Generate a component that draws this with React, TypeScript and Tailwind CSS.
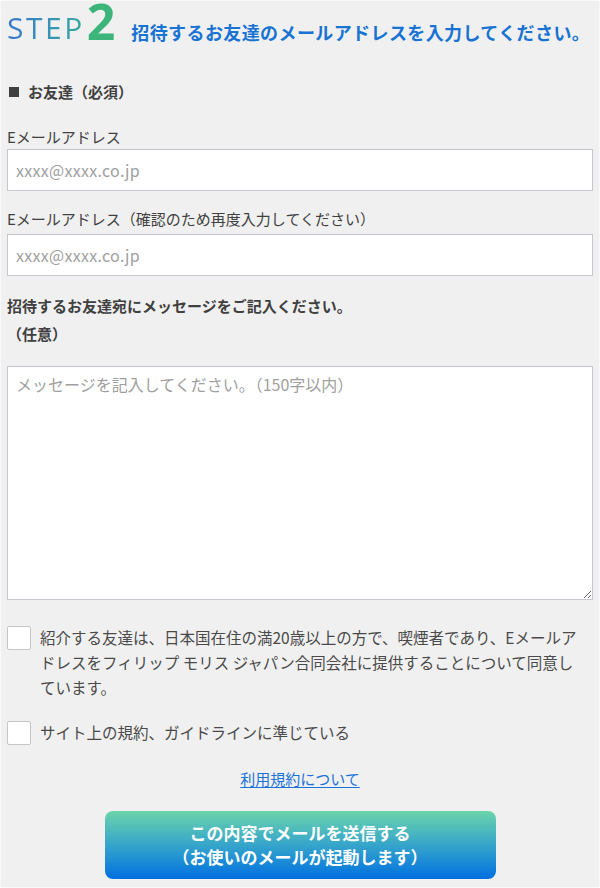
const jp = { fontFamily: '"Noto Sans CJK JP", "Noto Sans", sans-serif' };

export default function App() {
  return (
    <div
      className="min-h-[888px] border border-[#f9f9f9] bg-[#f0f0f0] px-[6px] text-[#404040]"
      style={jp}
    >
      <header className="flex h-[48px] items-end pb-[2px]">
        <span
          className="bg-gradient-to-r from-[#3878cc] to-[#3aa89c] bg-clip-text pb-[1px] text-[30px] leading-[36px] font-medium tracking-[2.5px] text-transparent"
          style={{ fontFamily: '"Open Sans", sans-serif' }}
        >
          STEP
        </span>
        <span
          className="ml-[2px] text-[50px] leading-[52px] font-bold text-[#3db57a]"
          style={{ fontFamily: '"Open Sans", sans-serif' }}
        >
          2
        </span>
        <h1 className="mb-[2px] ml-[16px] text-[18px] leading-[26px] font-bold tracking-[0.4px] whitespace-nowrap text-[#1873d3]">
          招待するお友達のメールアドレスを入力してください。
        </h1>
      </header>

      <p className="mt-[32px] flex items-center text-[15px] leading-[22px] font-bold text-[#404040]">
        <span className="mr-[9px] ml-[2px] inline-block h-[10px] w-[10px] bg-[#404040]" />
        お友達（必須）
      </p>

      <label className="mt-[23px] block text-[15px] leading-[22px]">Eメールアドレス</label>
      <input
        type="email"
        placeholder="xxxx@xxxx.co.jp"
        className="mt-[1px] block h-[42px] w-full border border-[#c6c6ce] bg-white px-[8px] text-[16px] tracking-[0.3px] placeholder:text-[#a0a0a0] outline-none"
      />

      <label className="mt-[17px] block text-[15px] leading-[22px]">
        Eメールアドレス（確認のため再度入力してください）
      </label>
      <input
        type="email"
        placeholder="xxxx@xxxx.co.jp"
        className="mt-[4px] block h-[42px] w-full border border-[#c6c6ce] bg-white px-[8px] text-[16px] tracking-[0.3px] placeholder:text-[#a0a0a0] outline-none"
      />

      <p className="mt-[16px] text-[15px] leading-[28px] font-bold">
        招待するお友達宛にメッセージをご記入ください。
        <br />
        （任意）
      </p>

      <textarea
        placeholder="メッセージを記入してください。（150字以内）"
        className="mt-[18px] block h-[234px] w-full border border-[#c6c6ce] bg-white px-[8px] py-[5px] text-[16px] leading-[24px] placeholder:text-[#a0a0a0] outline-none"
      />

      <div className="mt-[26px] flex items-start">
        <span className="h-[24px] w-[24px] shrink-0 rounded-[2px] border border-[#c6c6c6] bg-white" />
        <p className="-mt-[1px] ml-[9px] pr-[6px] text-[15.5px] leading-[25px] text-[#4a4a4a]">
          紹介する友達は、日本国在住の満20歳以上の方で、喫煙者であり、Eメールアドレスをフィリップ モリス ジャパン合同会社に提供することについて同意しています。
        </p>
      </div>

      <div className="mt-[20px] flex items-center">
        <span className="h-[24px] w-[24px] shrink-0 rounded-[2px] border border-[#c6c6c6] bg-white" />
        <p className="ml-[9px] text-[15.5px] leading-[25px] text-[#4a4a4a]">
          サイト上の規約、ガイドラインに準じている
        </p>
      </div>

      <div className="mt-[21px] text-center">
        <a href="#" className="text-[15px] leading-[24px] text-[#1a73d9] underline underline-offset-2">
          利用規約について
        </a>
      </div>

      <div className="mt-[20px] flex justify-center">
        <button
          type="button"
          className="h-[68px] w-[391px] rounded-[8px] bg-gradient-to-b from-[#6bd4a9] to-[#036ee0] text-[17px] leading-[24px] font-bold text-white"
        >
          この内容でメールを送信する
          <br />
          （お使いのメールが起動します）
        </button>
      </div>
    </div>
  );
}
